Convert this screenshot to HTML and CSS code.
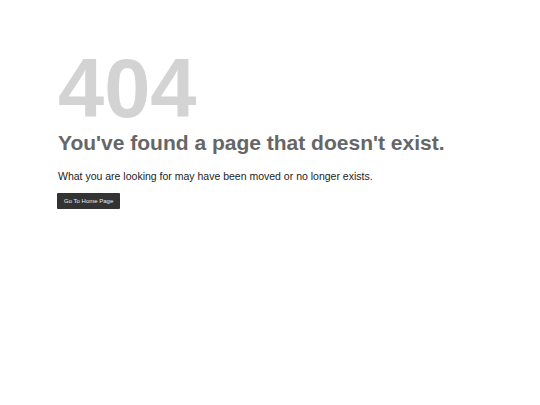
FILE: index.html
```html
<!DOCTYPE html>
<html>
<head>
<meta charset="utf-8">
<link rel="stylesheet" href="styles.css">
</head>
<body>
<main class="page">
  <div class="code">404</div>
  <h1 class="title">You've found a page that doesn't exist.</h1>
  <p class="lead">What you are looking for may have been moved or no longer exists.</p>
  <a class="btn" href="#">Go To Home Page</a>
</main>
</body>
</html>
```
FILE: styles.css
```css
html, body {
  margin: 0;
  padding: 0;
  background: #fff;
}
body {
  font-family: "Liberation Sans", Arial, sans-serif;
}
.page {
  padding: 47px 0 0 57px;
  display: flex;
  flex-direction: column;
  align-items: flex-start;
}
.code {
  font-size: 83px;
  font-weight: bold;
  color: #d3d3d3;
  line-height: 1;
  margin-left: 1px;
}
.title {
  font-size: 21px;
  font-weight: bold;
  color: #666;
  margin: 0 0 0 1px;
  line-height: 1.2;
}
.lead {
  font-size: 10.5px;
  color: #222;
  margin: 15px 0 0 1px;
}
.btn {
  display: inline-block;
  margin-top: 11px;
  background: #333;
  color: #eee;
  font-size: 6px;
  line-height: 7px;
  text-decoration: none;
  padding: 4.5px 7px;
  border-radius: 1px;
}
```
